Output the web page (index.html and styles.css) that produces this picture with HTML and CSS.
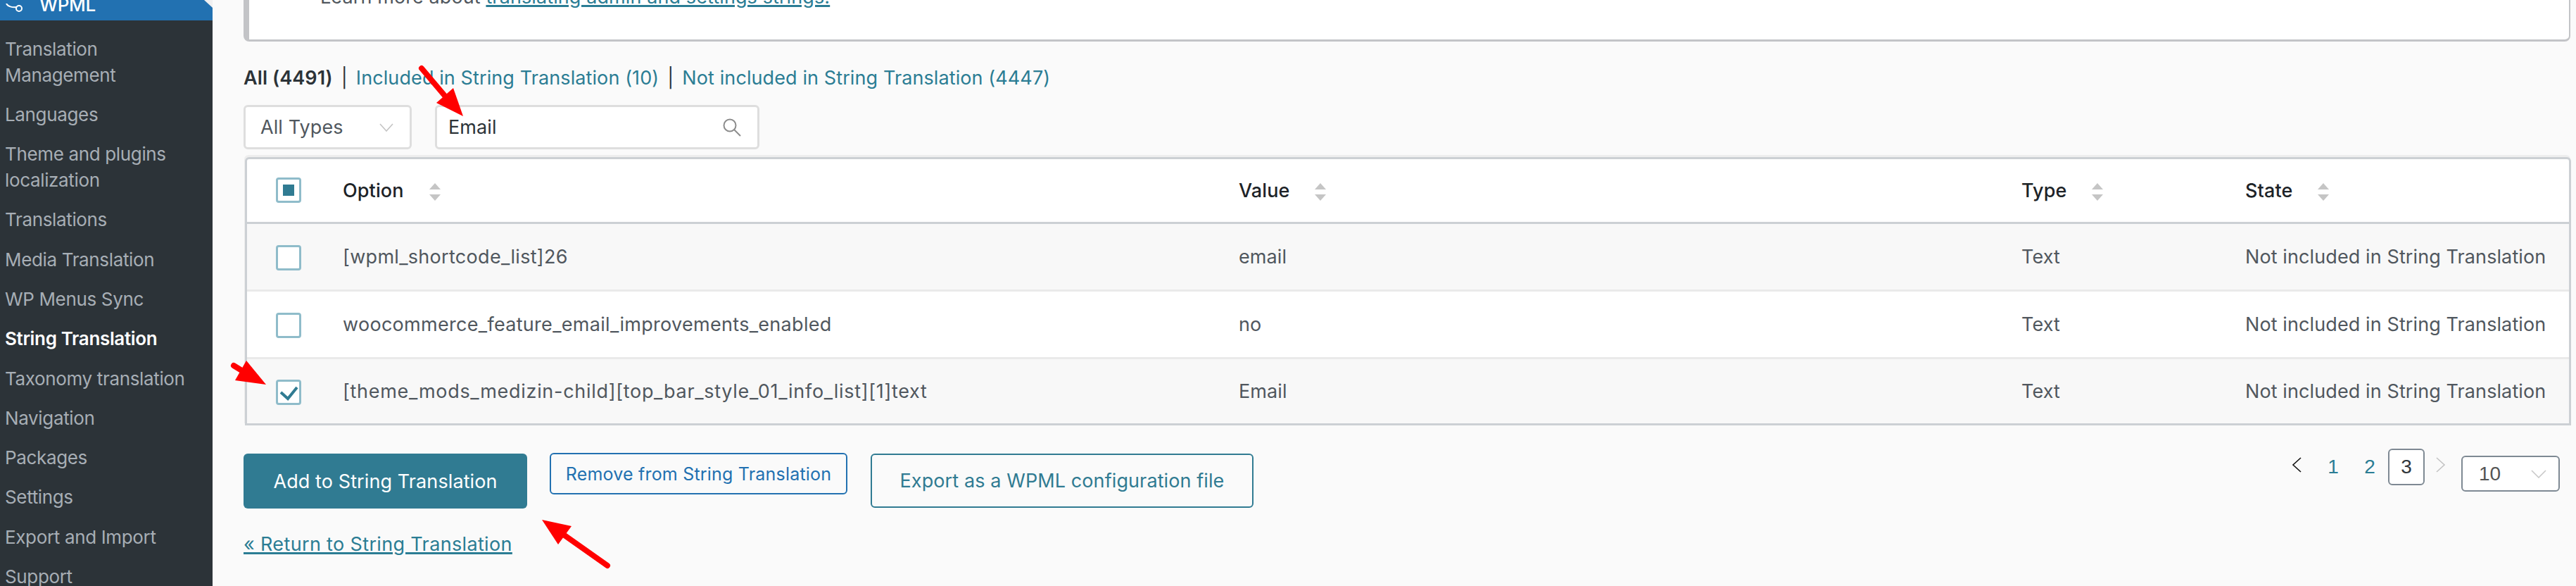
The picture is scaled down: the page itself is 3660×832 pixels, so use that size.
FILE: index.html
```html
<!DOCTYPE html>
<html lang="en">
<head>
<meta charset="utf-8">
<title>String Translation - WPML</title>
<link rel="stylesheet" href="styles.css">
</head>
<body>
<div class="shell">
  <aside class="sidebar">
    <div class="menu-head">
      <svg class="menu-icon" width="26" height="12" viewBox="0 0 26 12"><path d="M1 0c2 4 8 6 15 5" fill="none" stroke="#fff" stroke-width="2"/><circle cx="19" cy="7" r="4" fill="none" stroke="#fff" stroke-width="2"/></svg>
      <span class="menu-title">WPML</span>
    </div>
    <ul class="menu">
      <li>Translation Management</li>
      <li>Languages</li>
      <li>Theme and plugins localization</li>
      <li>Translations</li>
      <li>Media Translation</li>
      <li>WP Menus Sync</li>
      <li class="current">String Translation</li>
      <li>Taxonomy translation</li>
      <li>Navigation</li>
      <li>Packages</li>
      <li>Settings</li>
      <li>Export and Import</li>
      <li>Support</li>
    </ul>
  </aside>
  <main class="main">
    <div class="notice"><p>Learn more about <a href="#">translating admin and settings strings.</a></p></div>
    <nav class="tabs"><b>All (4491)</b><span class="sep">|</span><a href="#">Included in String Translation (10)</a><span class="sep">|</span><a href="#">Not included in String Translation (4447)</a></nav>
    <div class="filters">
      <div class="field type-field"><span>All Types</span>
        <svg width="20" height="12" viewBox="0 0 20 12"><path d="M1 1l9 10 9-10" fill="none" stroke="#c4c4c4" stroke-width="1.6"/></svg>
      </div>
      <div class="field search-field"><span>Email</span>
        <svg width="26" height="26" viewBox="0 0 26 26"><circle cx="10" cy="10" r="8.5" fill="none" stroke="#8c8c8c" stroke-width="2"/><path d="M16 16l9 9" stroke="#8c8c8c" stroke-width="2"/></svg>
      </div>
    </div>
    <div class="table-wrap">
      <table>
        <colgroup><col class="c-check"><col class="c-option"><col class="c-value"><col class="c-type"><col></colgroup>
        <thead>
          <tr>
            <th><span class="box"><i class="mixed"></i></span></th>
            <th>Option<span class="sort"><i class="up"></i><i class="down"></i></span></th>
            <th>Value<span class="sort"><i class="up"></i><i class="down"></i></span></th>
            <th>Type<span class="sort"><i class="up"></i><i class="down"></i></span></th>
            <th>State<span class="sort"><i class="up"></i><i class="down"></i></span></th>
          </tr>
        </thead>
        <tbody>
          <tr class="odd">
            <td><span class="box"></span></td>
            <td class="option">[wpml_shortcode_list]26</td><td>email</td><td>Text</td><td>Not included in String Translation</td>
          </tr>
          <tr>
            <td><span class="box"></span></td>
            <td class="option">woocommerce_feature_email_improvements_enabled</td><td>no</td><td>Text</td><td>Not included in String Translation</td>
          </tr>
          <tr class="odd">
            <td><span class="box"><svg width="30" height="30" viewBox="0 0 30 30"><path d="M4 15l10 9L27 8" fill="none" stroke="#307b92" stroke-width="4"/></svg></span></td>
            <td class="option option-long">[theme_mods_medizin-child][top_bar_style_01_info_list][1]text</td><td>Email</td><td>Text</td><td>Not included in String Translation</td>
          </tr>
        </tbody>
      </table>
    </div>
    <div class="actions">
      <button class="btn btn-primary">Add to String Translation</button>
      <button class="btn btn-remove">Remove from String Translation</button>
      <button class="btn btn-export">Export as a WPML configuration file</button>
      <div class="pager">
        <span class="page-arrow"><svg width="14" height="22" viewBox="0 0 14 22"><path d="M13 1L2 11l11 10" fill="none" stroke="#111" stroke-width="1.6"/></svg></span>
        <a class="page-num" href="#">1</a>
        <a class="page-num" href="#">2</a>
        <span class="page-num page-current">3</span>
        <span class="page-arrow page-next"><svg width="14" height="22" viewBox="0 0 14 22"><path d="M1 1l11 10L1 21" fill="none" stroke="#c3c3c3" stroke-width="1.6"/></svg></span>
        <div class="per-page"><span>10</span><svg width="22" height="12" viewBox="0 0 22 12"><path d="M1 1l10 10L21 1" fill="none" stroke="#c9c9c9" stroke-width="1.6"/></svg></div>
      </div>
    </div>
    <a class="return" href="#">« Return to String Translation</a>
  </main>
</div>
<svg class="annotations" width="3660" height="832" viewBox="0 0 3660 832">
  <g fill="#f00" stroke="none">
    <path d="M658 165L620 146 644 125Z"/>
    <path d="M378 546L334 540 350 512Z"/>
    <path d="M770 738L812 747 793 773Z"/>
  </g>
  <g stroke="#f00" stroke-width="8" stroke-linecap="round" fill="none">
    <path d="M599 97L632 136"/>
    <path d="M332 519L345 527"/>
    <path d="M802 760L863 803"/>
  </g>
</svg>
</body>
</html>
```
FILE: styles.css
```css
* { box-sizing: border-box; }
html, body { margin: 0; height: 832px; overflow: hidden; }
body {
  background: #fafafa;
  font-family: Inter, "Noto Sans", sans-serif;
  font-size: 27px;
  letter-spacing: 0.1px;
  color: #50575e;
}
a { color: #2b7d94; }
.shell { display: flex; height: 832px; }

.sidebar { width: 302px; flex: none; background: #2c3338; color: #a7aeb5; overflow: hidden; font-size: 26px; letter-spacing: -0.35px; }
.menu-head {
  position: relative;
  display: flex;
  align-items: flex-end;
  height: 29px;
  padding: 0 0 23px 8px;
  background: #2271b1;
  color: #fff;
}
.menu-head::after {
  content: "";
  position: absolute;
  top: 0;
  right: 0;
  border-style: solid;
  border-width: 0 12px 11px 0;
  border-color: transparent #f0f0f1 transparent transparent;
}
.menu-icon { flex: none; margin-bottom: -23px; transform: translateY(-12px); }
.menu-title { margin-left: 22px; line-height: 37px; margin-bottom: -19px; font-weight: 500; }
.menu { list-style: none; margin: 0; padding: 12px 25px 0 7px; line-height: 37px; }
.menu li { padding: 9.65px 0; }
.menu .current { color: #fff; font-weight: 600; }

.main { flex: 1; min-width: 0; padding: 0 8px 0 44px; }
.notice {
  height: 59px;
  padding-left: 101px;
  overflow: hidden;
  background: #fff;
  border: solid #c3c4c7;
  border-width: 0 2px 3px 8px;
  border-radius: 0 0 8px 8px;
}
.notice p { margin: -23px 0 0; line-height: 37px; }
.notice a { text-decoration-thickness: 3px; }

.tabs { margin-top: 33px; line-height: 37px; color: #2c3338; }
.tabs b { font-weight: 600; }
.tabs a { text-decoration: none; }
.sep { margin: 0 12px; }

.filters { display: flex; gap: 33px; margin-top: 20px; }
.field {
  display: flex;
  align-items: center;
  justify-content: space-between;
  height: 63px;
  background: #fff;
  border: 3px solid #dedede;
  border-radius: 6px;
}
.type-field { width: 239px; padding: 0 23px 0 21px; }
.search-field { width: 461px; padding: 0 23px 0 16px; color: #2c3338; }

.table-wrap {
  margin: 11px -1px 0 2px;
  background: #fff;
  border: 3px solid #ccd0d4;
  border-radius: 6px 6px 0 0;
  box-shadow: -1px -3px 0 #eeeeee;
}
table { width: 100%; border-collapse: collapse; table-layout: fixed; }
.c-check { width: 136px; }
.c-option { width: 1273px; }
.c-value { width: 1112px; }
.c-type { width: 318px; }
th, td { padding: 0; text-align: left; font-weight: 400; white-space: nowrap; }
th { height: 90px; color: #1d2327; font-weight: 500; border-bottom: 3px solid #ccd0d4; }
td { height: 96px; border-bottom: 3px solid #eaeaea; }
tbody tr:last-child td { border-bottom: 0; height: 93px; }
.odd { background: #f8f8f8; }
th:first-child, td:first-child { padding-left: 41px; }
td:first-child { padding-top: 3px; }
.option { letter-spacing: 0.3px; }
.option-long { letter-spacing: 0.7px; }

.box {
  display: flex;
  align-items: center;
  justify-content: center;
  width: 36px;
  height: 36px;
  background: #fff;
  border: 3px solid #8fbcca;
  border-radius: 4px;
}
.mixed { width: 16px; height: 16px; background: #307b92; }
.sort { display: inline-flex; flex-direction: column; gap: 7px; margin-left: 36px; vertical-align: middle; }
.up, .down { width: 0; height: 0; border-style: solid; border-color: transparent; }
.up { border-width: 0 8px 9px; border-bottom-color: #c5c5c5; }
.down { border-width: 9px 8px 0; border-top-color: #c5c5c5; }

.actions { display: flex; align-items: flex-start; margin-top: 39px; }
.btn { font: inherit; letter-spacing: inherit; border-style: solid; border-radius: 6px; background: transparent; padding: 0; }
.btn-primary { width: 403px; height: 78px; margin-top: 1px; background: #307b92; border: 0; color: #fff; }
.btn-remove { width: 423px; height: 59px; margin-left: 32px; border-width: 2px; border-color: #2271b1; color: #2271b1; font-size: 25px; letter-spacing: 0.2px; }
.btn-export { width: 544px; height: 77px; margin: 1px 0 0 33px; border-width: 2px; border-color: #307b92; color: #307b92; }

.pager {
  display: flex;
  align-items: flex-start;
  margin: -6px 15px 0 auto;
  font-family: "Liberation Sans", Arial, sans-serif;
  font-size: 28px;
  letter-spacing: 0;
}
.page-arrow { display: flex; align-items: center; justify-content: center; width: 52px; height: 46px; }
.page-next { width: 45px; justify-content: flex-start; padding-left: 16px; }
.page-num { display: flex; align-items: center; justify-content: center; width: 52px; height: 52px; text-decoration: none; }
.page-current { background: #fff; border: 2px solid #7e8993; border-radius: 6px; color: #32373c; }
.per-page {
  display: flex;
  align-items: center;
  justify-content: space-between;
  width: 140px;
  height: 51px;
  margin: 10px 0 0 7px;
  padding: 0 17px 0 23px;
  background: #fff;
  border: 2px solid #7e8993;
  border-radius: 6px;
  color: #555;
}
.return { display: inline-block; margin-top: 32px; line-height: 37px; letter-spacing: 0.35px; text-decoration-thickness: 3px; }

.annotations { position: absolute; top: 0; left: 0; pointer-events: none; }
```
